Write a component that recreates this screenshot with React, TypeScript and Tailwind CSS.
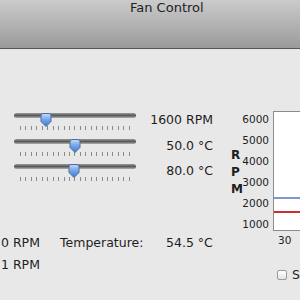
import React from 'react'

const font = { fontFamily: '"DejaVu Sans", "Noto Sans", sans-serif' }

const Thumb = () => (
  <svg width="12" height="15" viewBox="0 0 12 15">
    <defs>
      <linearGradient id="tg" x1="0" y1="0" x2="0" y2="1">
        <stop offset="0" stopColor="#c6dcf7" />
        <stop offset="0.5" stopColor="#6fa3e6" />
        <stop offset="1" stopColor="#3b7bd4" />
      </linearGradient>
    </defs>
    <path d="M1 2.5 Q1 0.5 3 0.5 H9 Q11 0.5 11 2.5 V8.5 L6 13.5 L1 8.5 Z" fill="url(#tg)" stroke="#4d6e9c" strokeWidth="1" />
  </svg>
)

const Slider = ({ pos }: { pos: number }) => (
  <div className="relative w-[122px] h-[25px]">
    <div className="mt-[5px] h-[5px] rounded-full bg-gradient-to-b from-[#9a9a9a] via-[#5a5a5a] to-[#b0b0b0]" />
    <div className="mt-[8px] flex justify-between px-[6px]">
      {Array.from({ length: 21 }).map((_, i) => (
        <div key={i} className="w-px h-[4px] bg-[#8a8a8a]" />
      ))}
    </div>
    <div className="absolute top-0" style={{ left: pos - 6 }}>
      <Thumb />
    </div>
  </div>
)

const sliders = [
  { pos: 32, label: '1600 RPM' },
  { pos: 61, label: '50.0 °C' },
  { pos: 60, label: '80.0 °C' },
]

export default function App() {
  return (
    <div className="w-[300px] h-[300px] overflow-hidden bg-[#e8e8e8] text-[#1e1e1e]" style={font}>
      <div className="h-[49px] bg-gradient-to-b from-[#cbcbcb] to-[#9b9b9b] border-b border-[#585858]">
        <div className="pl-[130px] pt-[0px] text-[13px] leading-[15px] text-[#222]">Fan Control</div>
      </div>
      <div className="flex">
        <div className="w-[225px] shrink-0">
          <div className="pt-[59px] flex flex-col">
            {sliders.map((s, i) => (
              <div key={i} className="flex items-start h-[25.5px]">
                <div className="ml-[14px]">
                  <Slider pos={s.pos} />
                </div>
                <div className="w-[77px] text-right text-[12.5px] leading-[15px] pt-[4px]">{s.label}</div>
              </div>
            ))}
          </div>
          <div className="mt-[50px] flex text-[12.5px] leading-[15px]">
            <div className="w-[60px] pl-[1px]">0 RPM</div>
            <div className="w-[106px]">Temperature:</div>
            <div>54.5 °C</div>
          </div>
          <div className="mt-[7px] pl-[1px] text-[12.5px] leading-[15px]">1 RPM</div>
        </div>
        <div className="flex flex-col shrink-0">
          <div className="flex pt-[62px]">
            <div className="w-[20px] pt-[36px] pl-[6px] flex flex-col text-[12px] leading-[17px] font-bold">
              <span>R</span>
              <span>P</span>
              <span>M</span>
            </div>
            <div className="w-[24px] flex flex-col items-end text-[10.5px] leading-[21px] mt-[-2px]">
              {['6000', '5000', '4000', '3000', '2000', '1000'].map((t) => (
                <span key={t}>{t}</span>
              ))}
            </div>
            <div className="ml-[4px] w-[60px] h-[120px] bg-white border border-[#8c8c8c] flex flex-col">
              <div className="mt-[85px] h-[2px] bg-[#8096d8]" />
              <div className="mt-[12px] h-[2px] bg-[#c9302c]" />
            </div>
          </div>
          <div className="pl-[53px] text-[10.5px] leading-[14px] mt-[-2px]">30</div>
          <div className="flex items-center pl-[52px] mt-[20px]">
            <div className="w-[10px] h-[10px] border border-[#9a9a9a] rounded-[2px] bg-gradient-to-b from-white to-[#e4e4e4]" />
            <span className="ml-[5px] text-[12.5px] leading-[15px]">Show</span>
          </div>
        </div>
      </div>
    </div>
  )
}
